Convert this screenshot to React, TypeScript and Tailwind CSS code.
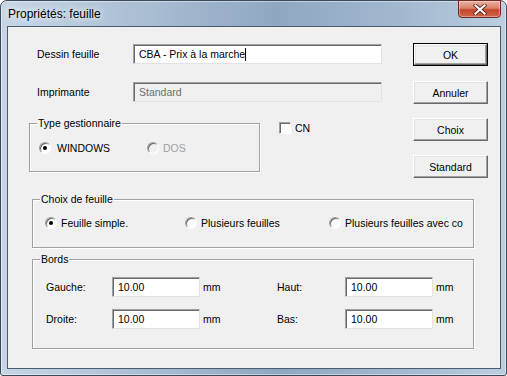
import type { ReactNode } from "react";

function TextBox({ value, width, disabled, caret }: { value: string; width: string; disabled?: boolean; caret?: boolean }) {
  return (
    <div
      className={`${width} h-[20px] flex items-center pl-[5px] border border-t-[#a0a0a0] border-l-[#a0a0a0] border-r-[#e3e3e3] border-b-[#e3e3e3] shadow-[inset_1px_1px_0_#696969] ${
        disabled ? "bg-[#f0f0f0] text-[#6d6d6d]" : "bg-white text-black"
      }`}
    >
      <span className="whitespace-nowrap">{value}</span>
      {caret && <span className="inline-block w-px h-[13px] bg-black" />}
    </div>
  );
}

function Button({ label, isDefault }: { label: string; isDefault?: boolean }) {
  const face = (
    <div className="h-full flex items-center justify-center bg-[#f0f0f0] border border-t-white border-l-white border-r-[#696969] border-b-[#696969] shadow-[inset_-1px_-1px_0_#a0a0a0,inset_1px_1px_0_#e3e3e3]">
      {label}
    </div>
  );
  if (isDefault) {
    return <div className="w-[75px] h-[23px] border border-black">{face}</div>;
  }
  return <div className="w-[75px] h-[23px]">{face}</div>;
}

function Radio({ checked, disabled }: { checked?: boolean; disabled?: boolean }) {
  return (
    <span
      className={`w-[12px] h-[12px] shrink-0 rounded-full flex items-center justify-center border border-t-[#a0a0a0] border-l-[#a0a0a0] border-r-white border-b-white shadow-[inset_1px_1px_0_#696969] ${
        disabled ? "bg-[#f0f0f0]" : "bg-white"
      }`}
    >
      {checked && <span className="w-[4px] h-[4px] rounded-full bg-black" />}
    </span>
  );
}

function Group({ title, className, children }: { title: string; className: string; children: ReactNode }) {
  return (
    <div className={`relative border border-[#a0a0a0] shadow-[inset_1px_1px_0_#ffffff,1px_1px_0_#ffffff] ${className}`}>
      <span className="absolute -top-[7px] left-[7px] px-px bg-[#f0f0f0] leading-[12px]">{title}</span>
      {children}
    </div>
  );
}

function CloseButton() {
  return (
    <div className="-mt-[1px] mr-[5px] w-[43px] h-[18px] rounded-b-[4px] border border-[#6b2a22] bg-[linear-gradient(180deg,#eab0a2_0%,#d98068_45%,#c4452c_55%,#d0664b_100%)] shadow-[inset_0_0_0_1px_rgba(255,255,255,0.35)] flex items-center justify-center">
      <svg width="14" height="11" viewBox="0 0 14 11">
        <path d="M2.5 1.5 L11.5 9.5 M11.5 1.5 L2.5 9.5" stroke="#5a2018" strokeWidth="3.8" strokeLinecap="square" />
        <path d="M2.5 1.5 L11.5 9.5 M11.5 1.5 L2.5 9.5" stroke="#ffffff" strokeWidth="2.2" strokeLinecap="square" />
      </svg>
    </div>
  );
}

export default function App() {
  return (
    <div className="w-[507px] h-[376px] flex flex-col rounded-t-[7px] rounded-b-[3px] border border-[#3a4a5c] bg-[linear-gradient(90deg,#c6d6e7_0%,#a8bcd2_30%,#8fa7c1_55%,#a3b9d0_80%,#bccee0_100%)] shadow-[inset_0_0_0_1px_rgba(255,255,255,0.45)] font-['Liberation_Sans',Arial,sans-serif]">
      {/* title bar */}
      <div className="h-[25px] flex items-start justify-between pl-[7px]">
        <span className="mt-[6px] text-[12px] leading-[14px] text-black [text-shadow:0_0_6px_#ffffff,0_0_10px_rgba(255,255,255,0.8)]">
          Propriétés: feuille
        </span>
        <CloseButton />
      </div>

      {/* client area */}
      <div className="ml-[6px] mr-[5px] mb-[6px] flex-1 border border-[#4c5c6f] bg-[#f0f0f0] text-[10.5px] leading-[12px] text-black">
        <div className="flex">
          <div className="w-[384px] pl-[21px] flex flex-col">
            <div className="mt-[17px] h-[20px] flex items-center">
              <span className="w-[104px] pl-[8px]">Dessin feuille</span>
              <TextBox value="CBA - Prix à la marche" width="w-[249px]" caret />
            </div>
            <div className="mt-[18px] h-[20px] flex items-center">
              <span className="w-[104px] pl-[8px]">Imprimante</span>
              <TextBox value="Standard" width="w-[249px]" disabled />
            </div>
            <div className="mt-[21px] flex items-start">
              <Group title="Type gestionnaire" className="w-[231px] h-[49px]">
                <div className="pt-[18px] pl-[9px] h-[12px] box-content flex items-center">
                  <div className="w-[108px] flex items-center gap-[6px]">
                    <Radio checked />
                    <span>WINDOWS</span>
                  </div>
                  <div className="flex items-center gap-[4px] text-[#a0a0a0]">
                    <Radio disabled />
                    <span>DOS</span>
                  </div>
                </div>
              </Group>
              <div className="ml-[19px] -mt-[1px] flex items-center gap-[4px]">
                <span className="w-[12px] h-[12px] bg-white border border-t-[#a0a0a0] border-l-[#a0a0a0] border-r-white border-b-white shadow-[inset_1px_1px_0_#696969]" />
                <span>CN</span>
              </div>
            </div>
          </div>
          <div className="ml-[21px] flex flex-col">
            <div className="mt-[16px]">
              <Button label="OK" isDefault />
            </div>
            <div className="mt-[15px]">
              <Button label="Annuler" />
            </div>
            <div className="mt-[14px]">
              <Button label="Choix" />
            </div>
            <div className="mt-[14px]">
              <Button label="Standard" />
            </div>
          </div>
        </div>

        <Group title="Choix de feuille" className="mt-[21px] ml-[24px] w-[442px] h-[49px]">
          <div className="pt-[17px] pl-[12px] h-[12px] box-content flex items-center">
            <div className="w-[140px] flex items-center gap-[4px]">
              <Radio checked />
              <span>Feuille simple.</span>
            </div>
            <div className="w-[144px] flex items-center gap-[4px]">
              <Radio />
              <span>Plusieurs feuilles</span>
            </div>
            <div className="flex items-center gap-[4px]">
              <Radio />
              <span className="whitespace-nowrap">Plusieurs feuilles avec co</span>
            </div>
          </div>
        </Group>

        <Group title="Bords" className="mt-[11px] ml-[24px] w-[442px] h-[90px]">
          <div className="pt-[17px] flex flex-col gap-[12px]">
            <div className="h-[20px] flex items-center">
              <div className="w-[244px] pl-[13px] flex items-center">
                <span className="w-[66px]">Gauche:</span>
                <TextBox value="10.00" width="w-[88px]" />
                <span className="ml-[3px]">mm</span>
              </div>
              <span className="w-[68px]">Haut:</span>
              <TextBox value="10.00" width="w-[88px]" />
              <span className="ml-[3px]">mm</span>
            </div>
            <div className="h-[20px] flex items-center">
              <div className="w-[244px] pl-[13px] flex items-center">
                <span className="w-[66px]">Droite:</span>
                <TextBox value="10.00" width="w-[88px]" />
                <span className="ml-[3px]">mm</span>
              </div>
              <span className="w-[68px]">Bas:</span>
              <TextBox value="10.00" width="w-[88px]" />
              <span className="ml-[3px]">mm</span>
            </div>
          </div>
        </Group>
      </div>
    </div>
  );
}
